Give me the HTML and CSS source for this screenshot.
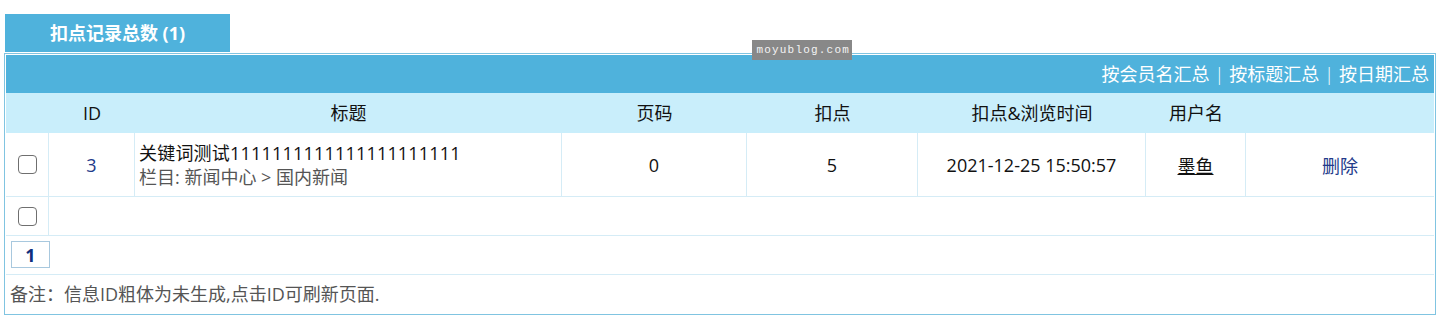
FILE: index.html
```html
<!DOCTYPE html>
<html lang="zh-CN">
<head>
<meta charset="utf-8">
<title>扣点记录</title>
<link rel="stylesheet" href="styles.css">
</head>
<body>
<div class="page">
  <div class="tab">扣点记录总数 (1)</div>
  <div class="panel">
    <div class="grid">
      <div class="bar">
        <a class="sum">按会员名汇总</a><span class="sep">|</span><a class="sum">按标题汇总</a><span class="sep">|</span><a class="sum">按日期汇总</a>
      </div>

      <div class="th"></div>
      <div class="th">ID</div>
      <div class="th">标题</div>
      <div class="th">页码</div>
      <div class="th">扣点</div>
      <div class="th">扣点&amp;浏览时间</div>
      <div class="th">用户名</div>
      <div class="th"></div>

      <div class="td cb"><input type="checkbox" class="check"></div>
      <div class="td"><a class="link">3</a></div>
      <div class="td title">
        <span class="t1">关键词测试1111111111111111111111</span>
        <span class="t2">栏目: 新闻中心 &gt; 国内新闻</span>
      </div>
      <div class="td">0</div>
      <div class="td">5</div>
      <div class="td">2021-12-25 15:50:57</div>
      <div class="td"><span class="user">墨鱼</span></div>
      <div class="td last"><a class="link">删除</a></div>

      <div class="td cb short"><input type="checkbox" class="check"></div>
      <div class="td rest short"></div>

      <div class="pager"><span class="pg">1</span></div>

      <div class="note">备注：信息ID粗体为未生成,点击ID可刷新页面.</div>
    </div>
  </div>
  <div class="watermark">moyublog.com</div>
</div>
</body>
</html>
```

FILE: styles.css
```css
html, body {
  margin: 0;
  padding: 0;
  background: #ffffff;
}

body {
  font-family: "Open Sans", "Noto Sans CJK SC", sans-serif;
  font-size: 18px;
  color: #111;
}

.page {
  padding: 14px 8px 0 4px;
}

.tab {
  margin-left: 1px;
  width: 225px;
  height: 38px;
  line-height: 38px;
  background: #4fb2dc;
  color: #ffffff;
  font-weight: bold;
  font-size: 18px;
  text-align: center;
  margin-bottom: 1px;
}

.panel {
  border: 1px solid #80c4e1;
  padding: 1px;
}

.grid {
  display: grid;
  grid-template-columns: 43px 86px 427px 185px 171px 228px 100px 188px;
}

.bar {
  grid-column: 1 / -1;
  height: 38px;
  line-height: 38px;
  background: #4fb2dc;
  color: #ffffff;
  text-align: right;
  padding-right: 5px;
  display: flex;
  justify-content: flex-end;
}

.sep {
  margin: 0 5px;
  font-weight: 300;
}

.th {
  height: 40px;
  line-height: 40px;
  background: #c9eefb;
  text-align: center;
  color: #111;
}

.td {
  box-sizing: border-box;
  height: 64px;
  border-right: 1px solid #d5ecf6;
  border-bottom: 1px solid #d5ecf6;
  display: flex;
  align-items: center;
  justify-content: center;
  color: #111;
}

.td.last {
  border-right: none;
}

.td.short {
  height: 39px;
}

.td.rest {
  grid-column: 2 / -1;
  border-right: none;
}

.td.title {
  flex-direction: column;
  align-items: flex-start;
  justify-content: center;
  padding-left: 4px;
  line-height: 24px;
}

.t1 {
  letter-spacing: 0.2px;
}

.t2 {
  color: #555;
}

.link {
  color: #233a8a;
}

.user {
  text-decoration: underline;
  text-decoration-thickness: 1px;
  text-underline-offset: 1px;
}

.check {
  appearance: none;
  -webkit-appearance: none;
  box-sizing: border-box;
  width: 19px;
  height: 19px;
  margin: 0;
  border: 1px solid #6f6f6f;
  border-radius: 4px;
  background: #ffffff;
}

.pager {
  grid-column: 1 / -1;
  box-sizing: border-box;
  height: 39px;
  border-bottom: 1px solid #d5ecf6;
  padding: 5px 0 0 5px;
}

.pg {
  box-sizing: border-box;
  display: flex;
  align-items: center;
  justify-content: center;
  width: 39px;
  height: 27px;
  border: 1px solid #a8c8de;
  color: #0f2f7e;
  font-weight: bold;
  font-size: 18px;
}

.note {
  grid-column: 1 / -1;
  height: 38px;
  line-height: 38px;
  padding-left: 4px;
  color: #555;
}

.watermark {
  position: absolute;
  left: 752px;
  top: 40px;
  width: 100px;
  height: 20px;
  line-height: 20px;
  background: #888888;
  color: #f4f4f4;
  font-family: "Liberation Mono", monospace;
  font-size: 11px;
  letter-spacing: 1.2px;
  text-align: right;
  padding-right: 2px;
  box-sizing: border-box;
}
```
